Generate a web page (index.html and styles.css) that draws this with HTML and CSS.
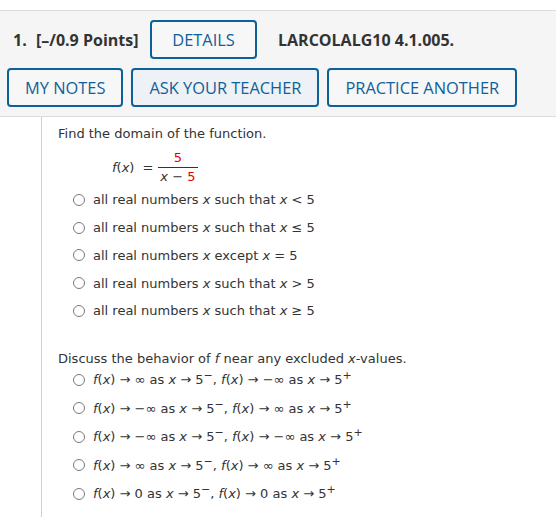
FILE: index.html
```html
<!DOCTYPE html>
<html>
<head>
<meta charset="utf-8">
<link rel="stylesheet" href="styles.css">
</head>
<body>
<div class="page">
  <div class="header">
    <div class="row1">
      <span class="num">1.</span>
      <span class="points">[–/0.9 Points]</span>
      <button class="btn details">DETAILS</button>
      <span class="code">LARCOLALG10 4.1.005.</span>
    </div>
    <div class="row2">
      <button class="btn">MY NOTES</button>
      <button class="btn active">ASK YOUR TEACHER</button>
      <button class="btn">PRACTICE ANOTHER</button>
    </div>
  </div>
  <div class="body">
    <div class="content">
      <p class="prompt">Find the domain of the function.</p>
      <div class="formula">
        <span class="lhs"><i>f</i>(<i>x</i>)</span>
        <span class="eq">=</span>
        <span class="frac">
          <span class="numer red">5</span>
          <span class="denom"><i>x</i> − <span class="red">5</span></span>
        </span>
      </div>
      <ul class="options">
        <li><span class="radio"></span><span>all real numbers <i>x</i> such that <i>x</i> &lt; 5</span></li>
        <li><span class="radio"></span><span>all real numbers <i>x</i> such that <i>x</i> ≤ 5</span></li>
        <li><span class="radio"></span><span>all real numbers <i>x</i> except <i>x</i> = 5</span></li>
        <li><span class="radio"></span><span>all real numbers <i>x</i> such that <i>x</i> &gt; 5</span></li>
        <li><span class="radio"></span><span>all real numbers <i>x</i> such that <i>x</i> ≥ 5</span></li>
      </ul>
      <p class="prompt second">Discuss the behavior of <i>f</i> near any excluded <i>x</i>-values.</p>
      <ul class="options limits">
        <li><span class="radio"></span><span><i>f</i>(<i>x</i>) → ∞ as <i>x</i> → 5<sup>−</sup>, <i>f</i>(<i>x</i>) → −∞ as <i>x</i> → 5<sup>+</sup></span></li>
        <li><span class="radio"></span><span><i>f</i>(<i>x</i>) → −∞ as <i>x</i> → 5<sup>−</sup>, <i>f</i>(<i>x</i>) → ∞ as <i>x</i> → 5<sup>+</sup></span></li>
        <li><span class="radio"></span><span><i>f</i>(<i>x</i>) → −∞ as <i>x</i> → 5<sup>−</sup>, <i>f</i>(<i>x</i>) → −∞ as <i>x</i> → 5<sup>+</sup></span></li>
        <li><span class="radio"></span><span><i>f</i>(<i>x</i>) → ∞ as <i>x</i> → 5<sup>−</sup>, <i>f</i>(<i>x</i>) → ∞ as <i>x</i> → 5<sup>+</sup></span></li>
        <li><span class="radio"></span><span><i>f</i>(<i>x</i>) → 0 as <i>x</i> → 5<sup>−</sup>, <i>f</i>(<i>x</i>) → 0 as <i>x</i> → 5<sup>+</sup></span></li>
      </ul>
    </div>
  </div>
</div>
</body>
</html>
```
FILE: styles.css
```css
html, body {
  margin: 0;
  padding: 0;
  background: #fff;
}
.page {
  padding-top: 10px;
}
.header {
  background: #f5f5f5;
  border-top: 1px solid #dcdcdc;
  border-bottom: 1px solid #dcdcdc;
  padding: 9px 0 9px 7px;
  font-family: "Open Sans", sans-serif;
  color: #333;
}
.row1 {
  display: flex;
  align-items: center;
  height: 39px;
}
.num {
  font-weight: 700;
  font-size: 16px;
  margin-left: 6px;
  width: 23px;
}
.points {
  font-weight: 700;
  font-size: 16px;
  width: 114px;
}
.code {
  font-weight: 700;
  font-size: 16px;
  margin-left: 21px;
}
.row2 {
  display: flex;
  gap: 8px;
  margin-top: 9px;
}
.btn {
  font-family: "Open Sans", sans-serif;
  font-size: 16.4px;
  color: #11609a;
  background: #f7f7f7;
  border: 2px solid #0d6199;
  border-radius: 4px;
  height: 39px;
  padding: 0 16px;
  margin: 0;
  box-sizing: border-box;
  cursor: pointer;
}
.btn.details {
  width: 107px;
  padding: 0;
}
.btn.active {
  background: #eef2f6;
}
.body {
  margin-left: 41px;
  border-left: 1px solid #d0d0d0;
  padding: 7px 0 0 16px;
  min-height: 400px;
  font-family: "DejaVu Sans", Verdana, sans-serif;
  font-size: 13px;
  color: #333;
}
.prompt {
  margin: 0;
  line-height: 20px;
}
.formula {
  display: flex;
  align-items: center;
  margin-left: 54px;
  margin-top: 5px;
  height: 37px;
}
.eq {
  margin: 0 5px 0 8px;
}
.frac {
  display: inline-flex;
  flex-direction: column;
  align-items: center;
}
.numer {
  border-bottom: 1px solid #333;
  width: 100%;
  text-align: center;
  padding: 0 2px 1px;
  box-sizing: border-box;
  line-height: 16px;
}
.denom {
  line-height: 16px;
  padding: 1px 2px 0;
}
.red {
  color: #e00000;
}
.options {
  list-style: none;
  margin: 0;
  padding: 0 0 0 15px;
}
.options li {
  display: flex;
  align-items: center;
  height: 27.75px;
}
.radio {
  width: 10px;
  height: 10px;
  border: 1.5px solid #7a7a7a;
  border-radius: 50%;
  margin-right: 8px;
  flex: none;
}
.second {
  margin-top: 24px;
}
.limits {
  margin-top: -3px;
}
.limits li {
  height: 28.4px;
}
sup {
  font-size: 11px;
  vertical-align: 5px;
  line-height: 0;
}
```
